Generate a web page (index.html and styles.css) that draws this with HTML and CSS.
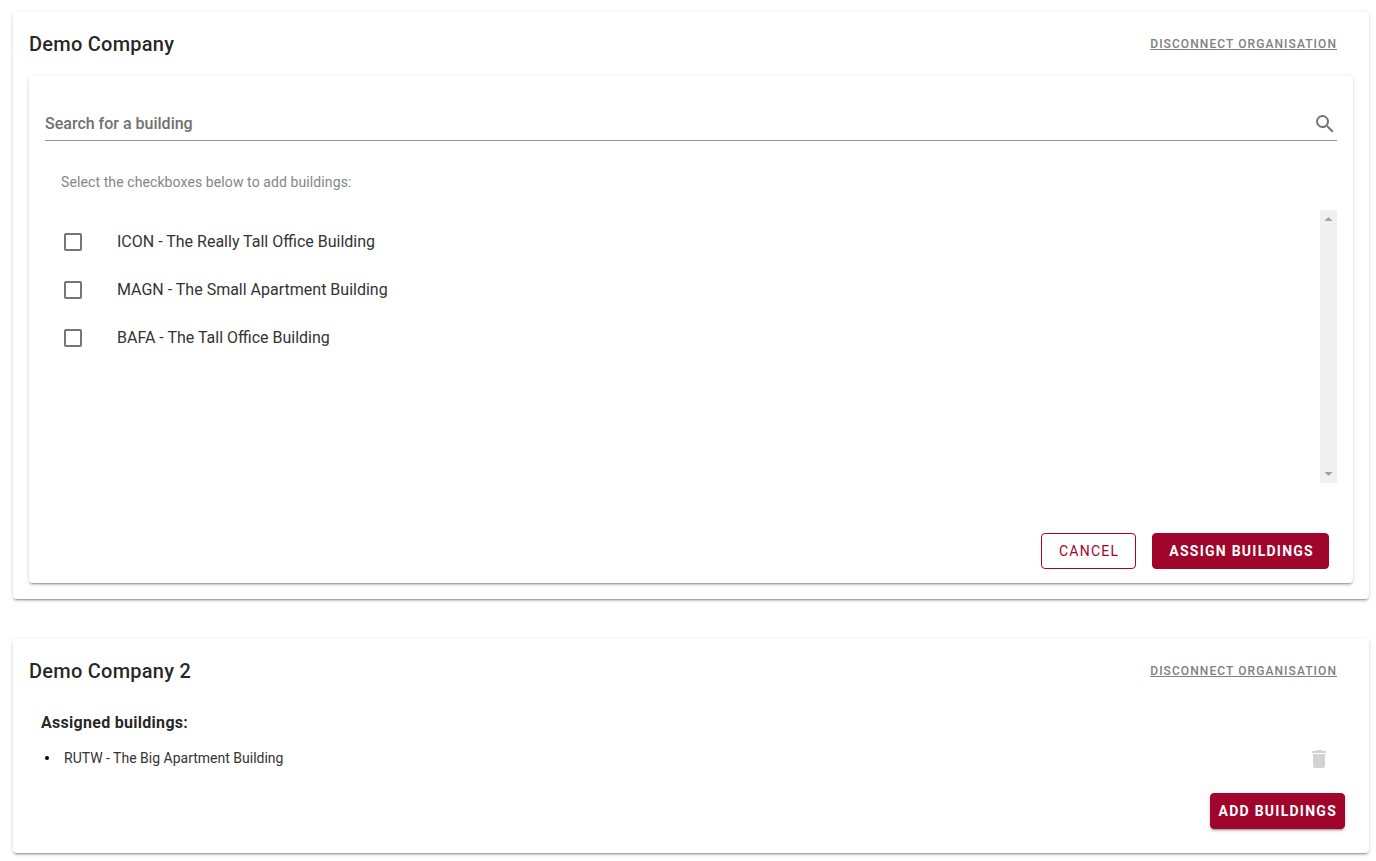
FILE: index.html
```html
<!DOCTYPE html>
<html lang="en">
<head>
<meta charset="utf-8">
<meta name="viewport" content="width=device-width, initial-scale=1">
<title>Organisations</title>
<link rel="stylesheet" href="styles.css">
</head>
<body>
<main class="page">

  <section class="card">
    <header class="card-header">
      <h2 class="card-title">Demo Company</h2>
      <button type="button" class="disconnect">Disconnect Organisation</button>
    </header>

    <form class="card assign">
      <div class="search">
        <input type="search" class="search-input" placeholder="Search for a building" aria-label="Search for a building">
        <svg class="icon" viewBox="0 0 24 24"><path d="M9.5,3A6.5,6.5 0 0,1 16,9.5C16,11.11 15.41,12.59 14.44,13.73L14.71,14H15.5L20.5,19L19,20.5L14,15.5V14.71L13.73,14.44C12.59,15.41 11.11,16 9.5,16A6.5,6.5 0 0,1 3,9.5A6.5,6.5 0 0,1 9.5,3M9.5,5C7,5 5,7 5,9.5C5,12 7,14 9.5,14C12,14 14,12 14,9.5C14,7 12,5 9.5,5Z"/></svg>
      </div>

      <p class="hint">Select the checkboxes below to add buildings:</p>

      <div class="scroll-area">
        <div class="options">
          <label class="option"><input type="checkbox" class="check">ICON - The Really Tall Office Building</label>
          <label class="option"><input type="checkbox" class="check">MAGN - The Small Apartment Building</label>
          <label class="option"><input type="checkbox" class="check">BAFA - The Tall Office Building</label>
        </div>
        <div class="scrollbar" aria-hidden="true">
          <svg class="arrow" viewBox="0 0 17 17"><path d="M4.5 11L8.5 7L12.5 11Z"/></svg>
          <svg class="arrow" viewBox="0 0 17 17"><path d="M4.5 6L8.5 10L12.5 6Z"/></svg>
        </div>
      </div>

      <div class="actions">
        <button type="button" class="btn btn-outlined">Cancel</button>
        <button type="submit" class="btn btn-wide">Assign Buildings</button>
      </div>
    </form>
  </section>

  <section class="card">
    <header class="card-header">
      <h2 class="card-title">Demo Company 2</h2>
      <button type="button" class="disconnect">Disconnect Organisation</button>
    </header>

    <div class="assigned">
      <h3 class="subtitle">Assigned buildings:</h3>
      <ul class="buildings">
        <li class="building">
          <span class="building-name">RUTW - The Big Apartment Building</span>
          <button type="button" class="remove" aria-label="Remove building">
            <svg class="icon" viewBox="0 0 24 24"><path d="M19,4H15.5L14.5,3H9.5L8.5,4H5V6H19M6,19A2,2 0 0,0 8,21H16A2,2 0 0,0 18,19V7H6V19Z"/></svg>
          </button>
        </li>
      </ul>
    </div>

    <div class="add">
      <button type="button" class="btn btn-raised">Add Buildings</button>
    </div>
  </section>

</main>
</body>
</html>
```
FILE: styles.css
```css
* {
  box-sizing: border-box;
  margin: 0;
  padding: 0;
}

body {
  background: #fff;
  color: rgba(0, 0, 0, 0.87);
  font-family: Roboto, sans-serif;
  font-size: 16px;
  line-height: 24px;
}

button,
input {
  font-family: inherit;
}

.page {
  display: flex;
  flex-direction: column;
  gap: 40px;
  padding: 12px 7px 8px 13px;
}

.card {
  background: #fff;
  border-radius: 4px;
  box-shadow: 0 3px 1px -2px rgba(0, 0, 0, 0.2), 0 2px 2px 0 rgba(0, 0, 0, 0.14), 0 1px 5px 0 rgba(0, 0, 0, 0.12);
}

.card-header {
  display: flex;
  align-items: center;
  justify-content: space-between;
  padding: 16px 32px 16px 16px;
}

.card-title {
  font-size: 20px;
  font-weight: 500;
  line-height: 32px;
  letter-spacing: 0.0125em;
}

.disconnect {
  border: 0;
  background: none;
  color: #808080;
  font-size: 12px;
  font-weight: 500;
  letter-spacing: 0.09em;
  text-decoration: underline;
  text-transform: uppercase;
  cursor: pointer;
}

.icon {
  width: 24px;
  height: 24px;
  fill: currentColor;
  flex: none;
}

/* assign form */
.assign {
  margin: 0 16px;
  padding: 32px 16px 14px;
}

.card:has(.assign) {
  padding-bottom: 16px;
}

.search {
  display: flex;
  align-items: center;
  height: 33px;
  border-bottom: 1px solid #949494;
  color: #757575;
}

.search-input {
  flex: 1;
  height: 32px;
  padding-bottom: 2px;
  border: 0;
  outline: 0;
  background: none;
  font-size: 16px;
  font-weight: 500;
}

.search-input::placeholder {
  color: #707070;
}

.hint {
  padding: 30px 16px 17px;
  color: #858585;
  font-size: 14px;
  line-height: 22px;
  letter-spacing: 0.0071em;
}

.scroll-area {
  display: flex;
  height: 273px;
}

.options {
  flex: 1;
  padding: 8px 16px;
}

.option {
  display: flex;
  align-items: center;
  gap: 35px;
  height: 48px;
  padding-left: 3px;
  color: #333;
}

.check {
  width: 18px;
  height: 18px;
  appearance: none;
  border: 2px solid #757575;
  border-radius: 2px;
}

.check:checked {
  background: #a0052b;
  border-color: #a0052b;
}

.scrollbar {
  display: flex;
  flex-direction: column;
  justify-content: space-between;
  width: 17px;
  background: #f0f0f0;
}

.arrow {
  width: 17px;
  height: 17px;
  fill: #a0a0a0;
}

.actions {
  display: flex;
  justify-content: flex-end;
  gap: 16px;
  padding: 50px 8px 0;
}

.btn {
  height: 36px;
  padding: 0 7px 0 8px;
  border: 1px solid #a0052b;
  border-radius: 4px;
  background: #a0052b;
  color: #fff;
  font-size: 14px;
  font-weight: 700;
  letter-spacing: 0.0893em;
  text-transform: uppercase;
  cursor: pointer;
}

.btn-wide {
  padding: 0 14px 0 16px;
}

.btn-outlined {
  padding: 0 16px 0 17px;
  background: #fff;
  color: #a0052b;
  font-weight: 400;
}

.btn-raised {
  box-shadow: 0 3px 1px -2px rgba(0, 0, 0, 0.2), 0 2px 2px 0 rgba(0, 0, 0, 0.14), 0 1px 5px 0 rgba(0, 0, 0, 0.12);
}

/* assigned buildings */
.assigned {
  padding: 8px 28px 0;
}

.subtitle {
  font-size: 16px;
  font-weight: 700;
  letter-spacing: 0.0179em;
}

.buildings {
  list-style: none;
  padding-top: 11px;
}

.building {
  display: flex;
  align-items: center;
  height: 24px;
  padding-left: 4px;
  color: #333;
  font-size: 14px;
}

.building::before {
  content: "";
  width: 4px;
  height: 4px;
  margin-right: 15px;
  border-radius: 50%;
  background: #000;
}

.building-name {
  flex: 1;
}

.remove {
  display: flex;
  margin-right: 10px;
  padding-top: 2px;
  border: 0;
  background: none;
  color: #d3d3d3;
  cursor: pointer;
}

.add {
  display: flex;
  justify-content: flex-end;
  padding: 23px 24px 24px;
}
```
